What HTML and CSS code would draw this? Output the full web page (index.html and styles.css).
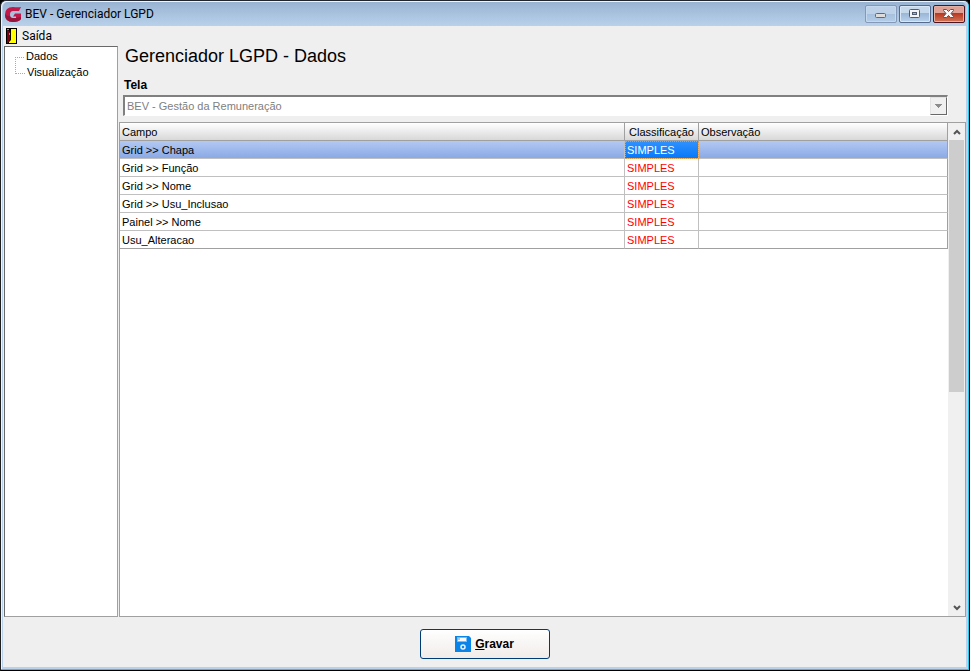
FILE: index.html
```html
<!DOCTYPE html>
<html lang="pt-BR">
<head>
<meta charset="utf-8">
<title>BEV - Gerenciador LGPD</title>
<link rel="stylesheet" href="styles.css">
</head>
<body>
<div class="window">
  <header class="titlebar">
    <svg class="logo" viewBox="0 0 17 17" aria-hidden="true">
      <path d="M16 1 14 5H8Q5 5 5 8.500T8 12H11V10.500H8L10 7.500H16V13Q14 16 8 16 0 16 0 8.500 0 1 8 1Q13 1.500 16 1Z" fill="#c01848"/>
      <path d="M0 8Q0 16 8 16 14 16 16 13V11L11 12H8Q5 12 5 10Q1 10 0 8Z" fill="#98143a"/>
    </svg>
    <h1 class="title">BEV - Gerenciador LGPD</h1>
    <div class="controls">
      <button class="control" type="button" aria-label="Minimizar">
        <svg viewBox="0 0 12 10"><rect x=".5" y="4.500" width="10" height="4" rx="1" fill="#dcdcdc" stroke="#606878"/></svg>
      </button>
      <button class="control active" type="button" aria-label="Maximizar">
        <svg viewBox="0 0 12 10"><rect x=".5" y=".5" width="10" height="8" rx="1" fill="#f4f4f4" stroke="#505a70"/><rect x="3.500" y="3.500" width="4" height="2" fill="#9cb6d8" stroke="#505a70"/></svg>
      </button>
      <button class="control close" type="button" aria-label="Fechar">
        <svg viewBox="0 0 12 10"><path d="M.5 .5h3l2 2 2-2h3v1L8 4.500l2.500 3v1h-3l-2-2-2 2h-3v-1L3 4.500.5 1.500z" fill="#f8f8f8" stroke="#55556a"/></svg>
      </button>
    </div>
  </header>
  <nav class="menu">
    <button class="menu-item" type="button">
      <svg class="door" viewBox="0 0 11 16" aria-hidden="true"><path d="M0 0h11v16H0z" fill="#000"/><path d="M5 1h5v14H3v-1l2-2z" fill="#ff0"/><path d="M1 2h1l2 2v8l-2 3H1z" fill="#800010"/><path d="M1 1h2v1H1zM3 5h1v2H3z" fill="#0cc"/></svg>
      Saída
    </button>
  </nav>
  <div class="workspace">
    <nav class="tree">
      <ul>
        <li><a href="#dados">Dados</a></li>
        <li><a href="#visualizacao">Visualização</a></li>
      </ul>
    </nav>
    <main class="main">
      <h2 class="heading">Gerenciador LGPD - Dados</h2>
      <label class="label" for="tela">Tela</label>
      <div class="combo">
        <select id="tela" disabled><option>BEV - Gestão da Remuneração</option></select>
        <span class="drop"><svg viewBox="0 0 7 4"><path d="M0 0h7v1H6v1H5v1H4v1H3V3H2V2H1V1H0z" fill="#8c8c8c"/></svg></span>
      </div>
      <section class="grid">
        <div class="grid-body">
          <table>
            <colgroup><col><col class="col-class"><col class="col-note"></colgroup>
            <thead><tr><th>Campo</th><th class="center">Classificação</th><th>Observação</th></tr></thead>
            <tbody>
              <tr class="selected"><td>Grid &gt;&gt; Chapa</td><td class="level">SIMPLES</td><td></td></tr>
              <tr><td>Grid &gt;&gt; Função</td><td class="level">SIMPLES</td><td></td></tr>
              <tr><td>Grid &gt;&gt; Nome</td><td class="level">SIMPLES</td><td></td></tr>
              <tr><td>Grid &gt;&gt; Usu_Inclusao</td><td class="level">SIMPLES</td><td></td></tr>
              <tr><td>Painel &gt;&gt; Nome</td><td class="level">SIMPLES</td><td></td></tr>
              <tr><td>Usu_Alteracao</td><td class="level">SIMPLES</td><td></td></tr>
            </tbody>
          </table>
        </div>
        <div class="scrollbar">
          <button type="button" aria-label="Rolar para cima"><svg viewBox="0 0 8 6"><path d="M1 5 4 2l3 3" fill="none" stroke="#555" stroke-width="2"/></svg></button>
          <div class="track"><div class="thumb"></div></div>
          <button type="button" aria-label="Rolar para baixo"><svg viewBox="0 0 8 6"><path d="m1 1 3 3 3-3" fill="none" stroke="#555" stroke-width="2"/></svg></button>
        </div>
      </section>
    </main>
  </div>
  <footer class="footer">
    <button class="save" type="button">
      <svg class="disk" viewBox="0 0 16 16" aria-hidden="true"><path d="M0 0h14l2 2v14H0z" fill="#0a84e8"/><path d="M2 1h10v5H2z" fill="#7dbcf2"/><path d="M3 2h8v3H3z" fill="#f6f8fa"/><path d="M3 2h2v2H3z" fill="#9ccdf5"/><circle cx="8" cy="11" r="2" fill="#1584e0" stroke="#e4f2fc" stroke-width="1.500"/></svg>
      <span><u>G</u>ravar</span>
    </button>
  </footer>
</div>
</body>
</html>
```
FILE: styles.css
```css
* { box-sizing: border-box; }

body {
  margin: 0;
  background: #000;
  font: 11px/16px "Liberation Sans", Arial, sans-serif;
  color: #000;
}

button { font: inherit; color: inherit; }
svg { display: block; flex: none; }

.window {
  display: flex;
  flex-direction: column;
  height: 100vh;
  padding: 0 3px 3px 2px;
  border: 1px solid #000;
  border-color: #20242c #000 #000 #202020;
  border-radius: 6px 6px 0 0;
  background: #b9d1ea;
  box-shadow: inset -1px -1px #2cc6e8, inset 1px 1px #eef5fc;
}

.titlebar {
  display: flex;
  align-items: center;
  height: 24px;
  margin-top: 1px;
  padding-left: 2px;
  gap: 3px;
  background: linear-gradient(#98b3d2, #b9d1ea);
  border-radius: 5px 5px 0 0;
}

.logo { width: 17px; height: 17px; }

.title {
  margin: 0;
  font: 12px/16px Roboto, sans-serif;
}

.controls {
  display: flex;
  align-self: flex-start;
  gap: 2px;
  margin: 3px 1px 0 auto;
}

.control {
  display: grid;
  place-items: center;
  width: 32px;
  height: 18px;
  padding: 0;
  border: 1px solid #8498b8;
  border-radius: 2px;
  background: linear-gradient(#bdd1e8 50%, #a5c0de 50%, #b4cde8);
  box-shadow: inset 0 0 0 1px #c4d8ee;
}

.control svg { width: 12px; height: 10px; }

.active {
  border-color: #566a8c;
  background: linear-gradient(#c6d8ec 45%, #9ab6d6 45%, #b8d2ec);
  box-shadow: inset 0 0 0 1px #d8e6f6;
}

.close {
  border-color: #4c1420;
  background: linear-gradient(#dfa196 45%, #b8361f 45%, #d07758);
  box-shadow: inset 0 0 0 1px #e5b0a4;
}

.menu {
  display: flex;
  height: 20px;
  padding-left: 3px;
  background: #efefef;
}

.menu-item {
  display: flex;
  align-items: center;
  gap: 5px;
  padding: 0;
  border: 0;
  background: none;
  font: 12px/16px Roboto, sans-serif;
}

.door { width: 11px; height: 16px; }

.workspace {
  display: flex;
  flex: 1;
  gap: 1px;
  min-height: 0;
  padding-left: 1px;
  background: #efefef;
}

.tree {
  width: 114px;
  padding: 1px 0 0 10px;
  border: 1px solid #a0a0a0;
  border-color: #696969 #a0a0a0 #a0a0a0 #696969;
  background: #fff;
}

.tree ul { margin: 0; padding: 0; list-style: none; }

.tree li { display: flex; }

.tree li::before {
  content: "";
  width: 9px;
  height: 9px;
  margin-right: 2px;
  border-bottom: 1px dotted #aaa;
}

.tree li + li::before {
  height: 16px;
  margin-top: -7px;
  border-left: 1px dotted #aaa;
}

.tree a { color: inherit; text-decoration: none; }

.main {
  display: flex;
  flex: 1;
  flex-direction: column;
  min-width: 0;
}

.heading {
  margin: 0 0 11px 6px;
  font-size: 18px;
  line-height: 20px;
  font-weight: normal;
}

.label {
  margin-left: 5px;
  font-size: 12px;
  line-height: 16px;
  font-weight: bold;
}

.combo {
  display: flex;
  height: 21px;
  margin: 2px 18px 6px 4px;
  border: 1px solid #fff;
  border-top: 2px solid #808080;
  border-left: 2px solid #808080;
  background: #fff;
}

.combo select {
  flex: 1;
  min-width: 0;
  padding: 0 2px;
  border: 0;
  appearance: none;
  background: #fff;
  color: #808080;
  font: inherit;
  opacity: 1;
}

.drop {
  display: grid;
  place-items: center;
  width: 17px;
  border: 1px solid #696969;
  border-top-color: #e3e3e3;
  border-left-color: #e3e3e3;
  background: #f0f0f0;
}

.drop svg { width: 7px; height: 4px; }

.grid {
  display: flex;
  flex: 1;
  min-height: 0;
  border: 1px solid #a0a0a0;
  background: #fff;
}

.grid-body { flex: 1; min-width: 0; }

table {
  width: 100%;
  border-collapse: separate;
  border-spacing: 0;
  table-layout: fixed;
}

.col-class { width: 74px; }
.col-note { width: 249px; }

th, td {
  height: 18px;
  padding: 0 2px;
  border: 0 solid #c0c0c0;
  border-width: 0 1px 1px 0;
  line-height: 16px;
  font-weight: normal;
  text-align: left;
  white-space: nowrap;
}

th {
  border-color: #a0a0a0;
  background: linear-gradient(#fff, #d8d8d8);
}

th.center { text-align: center; }
td:last-child, th:last-child { border-right-color: #a0a0a0; }
tbody tr:last-child td { border-bottom-color: #a0a0a0; }
.level { color: #f00; }

.selected td { background: linear-gradient(#b3c9f3, #8ba9e5); }

.selected .level {
  background: linear-gradient(#3092ff, #0878f8);
  color: #fff;
  outline: 1px dotted #e49a42;
  outline-offset: -1px;
}

.scrollbar {
  display: flex;
  flex-direction: column;
  width: 17px;
  padding: 0 1px;
  background: #f0f0f0;
}

.scrollbar button {
  display: grid;
  place-items: center;
  height: 17px;
  padding: 0;
  border: 0;
  background: none;
}

.scrollbar svg { width: 8px; height: 6px; }
.track { flex: 1; }
.thumb { height: 55%; background: #cdcdcd; }

.footer {
  display: flex;
  justify-content: center;
  padding: 12px 0 8px;
  background: #efefef;
}

.save {
  display: flex;
  align-items: center;
  justify-content: center;
  gap: 4px;
  width: 130px;
  height: 30px;
  border: 1px solid #003c74;
  border-radius: 3px;
  background: linear-gradient(#fff, #f0ece9);
  font-size: 12px;
  font-weight: bold;
}

.disk { width: 16px; height: 16px; }
```
